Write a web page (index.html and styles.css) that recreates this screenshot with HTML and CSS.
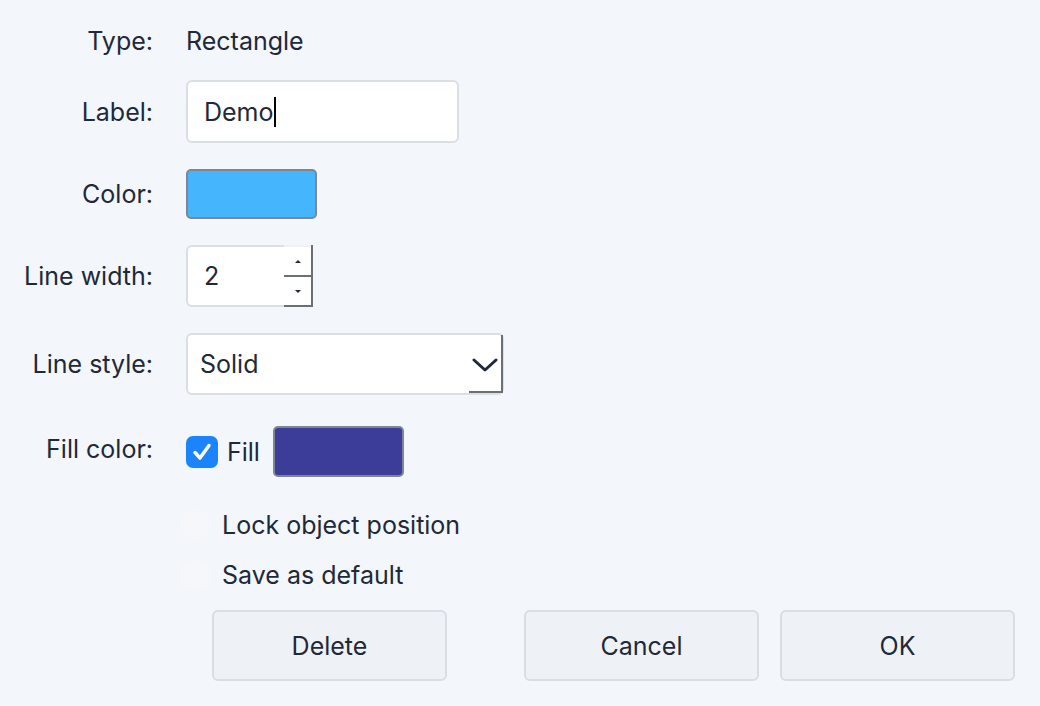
FILE: index.html
```html
<!DOCTYPE html>
<html>
<head>
<meta charset="utf-8">
<link rel="stylesheet" href="styles.css">
</head>
<body>
<div class="dialog">
  <div class="form">
    <div class="lbl type-row">Type:</div>
    <div class="val type-row">Rectangle</div>

    <div class="lbl">Label:</div>
    <div class="val"><div class="text-input">Demo<span class="caret"></span></div></div>

    <div class="lbl">Color:</div>
    <div class="val"><div class="swatch swatch-blue"></div></div>

    <div class="lbl">Line width:</div>
    <div class="val">
      <div class="spin">
        <div class="spin-value">2</div>
        <div class="spin-btns">
          <div class="spin-up"><span class="tri-up"></span></div>
          <div class="spin-down"><span class="tri-down"></span></div>
        </div>
      </div>
    </div>

    <div class="lbl">Line style:</div>
    <div class="val">
      <div class="select">
        <span class="select-text">Solid</span>
        <svg class="chev" width="26" height="16" viewBox="0 0 26 16"><path d="M2 3 L13 13 L24 3" fill="none" stroke="#1e2939" stroke-width="3" stroke-linecap="round" stroke-linejoin="round"/></svg>
        <span class="select-edge"></span>
      </div>
    </div>

    <div class="lbl fill-lbl">Fill color:</div>
    <div class="val fill-val">
      <span class="cb">
        <svg width="22" height="20" viewBox="0 0 22 20"><path d="M4 10.5 L9 16 L18 3.5" fill="none" stroke="#fff" stroke-width="3.4" stroke-linecap="round" stroke-linejoin="round"/></svg>
      </span>
      <span class="fill-text">Fill</span>
      <div class="swatch swatch-indigo"></div>
    </div>
  </div>

  <div class="checks">
    <div class="check-row"><span class="ghost-cb"></span><span>Lock object position</span></div>
    <div class="check-row"><span class="ghost-cb"></span><span>Save as default</span></div>
  </div>

  <div class="buttons">
    <button class="btn">Delete</button>
    <div class="spacer"></div>
    <button class="btn">Cancel</button>
    <button class="btn">OK</button>
  </div>
</div>
</body>
</html>
```

FILE: styles.css
```css
html, body {
  margin: 0;
  padding: 0;
  background: #f3f6fa;
}
body {
  font-family: "Inter", "Liberation Sans", sans-serif;
  font-size: 25px;
  color: #1e2939;
  width: 1040px;
  height: 706px;
  overflow: hidden;
}
.dialog {
  padding-top: 26px;
}
.form {
  display: grid;
  grid-template-columns: 153px 1fr;
  grid-template-rows: 28px 63px 50px 62px 62px 56px;
  column-gap: 33px;
  row-gap: 26px;
  align-items: center;
}
.lbl {
  text-align: right;
  line-height: 30px;
}
.val {
  display: flex;
  align-items: center;
  line-height: 30px;
}
.type-row {
  margin-top: 2px;
}
.text-input {
  box-sizing: border-box;
  width: 273px;
  height: 63px;
  background: #fff;
  border: 2px solid #d9dee7;
  border-radius: 6px;
  padding-left: 16px;
  display: flex;
  align-items: center;
}
.caret {
  display: inline-block;
  width: 2px;
  height: 30px;
  background: #000;
}
.swatch {
  box-sizing: border-box;
  width: 131px;
  height: 50px;
  border: 2px solid #7d8695;
  border-radius: 5px;
}
.swatch-blue { background: #45b6fe; }
.swatch-indigo { background: #3b3d99; height: 51px; }

.spin {
  box-sizing: border-box;
  width: 127px;
  height: 62px;
  background: #fff;
  border: 2px solid #d9dee7;
  border-right: none;
  border-radius: 6px 0 0 6px;
  display: flex;
}
.spin-value {
  flex: 1;
  display: flex;
  align-items: center;
  padding-left: 16px;
}
.spin-btns {
  width: 27px;
  display: flex;
  flex-direction: column;
  margin-top: -2px;
  margin-bottom: -2px;
  border-right: 2px solid #6b6f76;
}
.spin-up, .spin-down {
  flex: 1;
  display: flex;
  align-items: center;
  justify-content: center;
  border-bottom: 2px solid #6b6f76;
  background: #fff;
}
.spin-up { border-top: 2px solid #eef1f5; }
.tri-up {
  width: 0; height: 0;
  border-left: 3px solid transparent;
  border-right: 3px solid transparent;
  border-bottom: 3px solid #1e2939;
}
.tri-down {
  width: 0; height: 0;
  border-left: 3px solid transparent;
  border-right: 3px solid transparent;
  border-top: 3px solid #1e2939;
}

.select {
  position: relative;
  box-sizing: border-box;
  width: 318px;
  height: 62px;
  background: #fff;
  border: 2px solid #d9dee7;
  border-radius: 6px;
  display: flex;
  align-items: center;
  padding-left: 12px;
}
.select-text { flex: 1; }
.chev {
  margin-right: 4px;
  margin-top: 2px;
}
.select-edge {
  position: absolute;
  right: -1px;
  top: 0;
  bottom: 0;
  width: 32px;
  border-right: 2px solid #6b6f76;
  border-bottom: 2px solid #6b6f76;
}

.fill-val {
  align-self: end;
  height: 51px;
}
.cb {
  box-sizing: border-box;
  width: 32px;
  height: 32px;
  border-radius: 7px;
  background: #1b84fc;
  display: flex;
  align-items: center;
  justify-content: center;
}
.fill-text {
  margin-left: 9px;
  margin-right: 13px;
}

.checks {
  margin-top: 30px;
  padding-left: 181px;
  display: flex;
  flex-direction: column;
  gap: 14px;
}
.check-row {
  display: flex;
  align-items: center;
  height: 36px;
  gap: 11px;
}
.ghost-cb {
  width: 30px;
  height: 30px;
  border-radius: 50%;
  background: #f5f7fb;
}

.buttons {
  margin-top: 17px;
  padding-left: 212px;
  padding-right: 25px;
  display: flex;
  gap: 21px;
}
.spacer { flex: 1; }
.btn {
  box-sizing: border-box;
  width: 235px;
  height: 71px;
  background: #eef2f7;
  border: 2px solid #d8dde6;
  border-radius: 6px;
  font-family: "Inter", "Liberation Sans", sans-serif;
  font-size: 25px;
  color: #1e2939;
  padding: 0;
}
```
